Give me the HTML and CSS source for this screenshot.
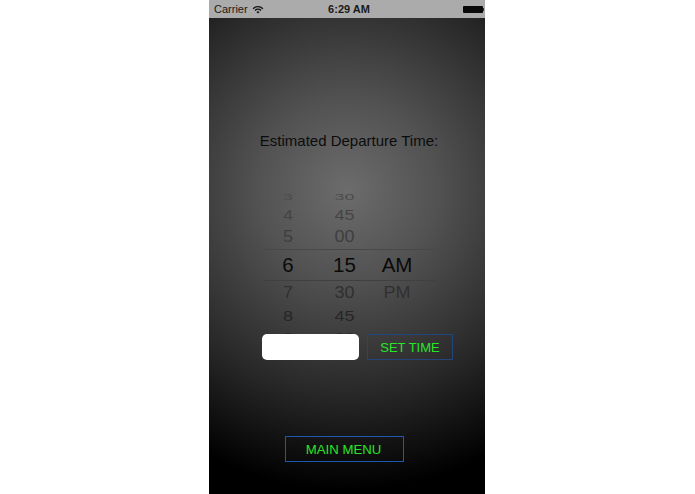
FILE: index.html
```html
<!DOCTYPE html>
<html lang="en">
<head>
  <meta charset="UTF-8" />
  <title>Departure Time</title>
  <link rel="stylesheet" href="styles.css">
</head>
<body>
  <div class="phone">
    <div class="status-bar">
      <div class="status-left">
        <span>Carrier</span>
        <svg class="wifi" width="12" height="9" viewBox="0 0 12 9">
          <path d="M0.6 3.2 A7.6 7.6 0 0 1 11.4 3.2 L10.4 4.2 A6.2 6.2 0 0 0 1.6 4.2 Z" fill="#111"/>
          <path d="M2.5 5 A4.9 4.9 0 0 1 9.5 5 L8.5 6 A3.5 3.5 0 0 0 3.5 6 Z" fill="#111"/>
          <path d="M4.4 6.9 A2.3 2.3 0 0 1 7.6 6.9 L6 8.6 Z" fill="#111"/>
        </svg>
      </div>
      <div class="status-time">6:29 AM</div>
      <div class="status-right">
        <div class="battery"></div>
        <div class="battery-tip"></div>
      </div>
    </div>
    <div class="screen">
      <h1 class="title">Estimated Departure Time:</h1>
      <div class="picker">
        <div class="row row-1"><span>3</span><span>30</span><span></span></div>
        <div class="row row-2"><span>4</span><span>45</span><span></span></div>
        <div class="row row-3"><span>5</span><span>00</span><span></span></div>
        <div class="row row-current"><span>6</span><span>15</span><span>AM</span></div>
        <div class="row row-5"><span>7</span><span>30</span><span>PM</span></div>
        <div class="row row-6"><span>8</span><span>45</span><span></span></div>
        <div class="row row-7"><span>9</span><span>00</span><span></span></div>
      </div>
      <div class="time-controls">
        <input class="time-input" type="text" />
        <button class="outline-btn set-time">SET TIME</button>
      </div>
      <button class="outline-btn main-menu">MAIN MENU</button>
    </div>
  </div>
</body>
</html>
```

FILE: styles.css
```css
body {
  margin: 0;
  background: #fff;
  font-family: 'Liberation Sans', Arial, sans-serif;
}

.phone {
  width: 276px;
  height: 494px;
  margin-left: 209px;
  display: flex;
  flex-direction: column;
  overflow: hidden;
}

.status-bar {
  height: 18px;
  background: #ababab;
  color: #1a1a1a;
  font-size: 11px;
  display: grid;
  grid-template-columns: 1fr auto 1fr;
  align-items: center;
  padding: 0 1px 0 5px;
}

.status-left {
  display: flex;
  align-items: center;
  gap: 4px;
}

.status-time {
  font-weight: 700;
}

.status-right {
  display: flex;
  justify-content: flex-end;
  align-items: center;
}

.battery {
  width: 20px;
  height: 7px;
  background: #0a0a0a;
  border-radius: 1px;
}

.battery-tip {
  width: 1px;
  height: 3px;
  background: #333;
}

.screen {
  flex: 1;
  display: flex;
  flex-direction: column;
  background: radial-gradient(circle 300px at 138px 172px, #6c6c6c 0%, #525252 30%, #282828 68%, #000 100%);
}

.title {
  margin: 114px 0 0;
  height: 18px;
  line-height: 18px;
  font-size: 15px;
  font-weight: 400;
  color: #0c0c0c;
  text-align: center;
  padding-left: 4px;
}

.picker {
  margin: 38px 0 0 55px;
  width: 172px;
  height: 146px;
  overflow: hidden;
}

.row {
  display: grid;
  grid-template-columns: 48px 65px 40px;
  text-align: center;
  align-items: center;
  font-size: 18px;
  line-height: 18px;
}

.row span {
  display: block;
}

.row-1 {
  height: 17px;
  color: #4c4c4c;
}

.row-1 span {
  transform: scaleY(0.46);
}

.row-2 {
  height: 20px;
  color: #444;
}

.row-2 span {
  transform: scaleY(0.8);
}

.row-3 {
  height: 24px;
  color: #3e3e3e;
}

.row-3 span {
  transform: scaleY(0.9);
}

.row-current {
  box-sizing: border-box;
  height: 32px;
  font-size: 20.5px;
  color: #0a0a0a;
  border-top: 1px solid #484848;
  border-bottom: 1px solid #404040;
}

.row-5 {
  height: 24px;
  color: #303030;
}

.row-5 span {
  transform: scaleY(0.9);
}

.row-6 {
  height: 22px;
  color: #262626;
}

.row-6 span {
  transform: scaleY(0.77);
}

.row-7 {
  height: 20px;
  color: #2a2a2a;
}

.row-7 span {
  transform: scaleY(0.6);
}

.time-controls {
  display: flex;
  gap: 8px;
  margin-left: 53px;
}

.time-input {
  box-sizing: border-box;
  width: 97px;
  height: 26px;
  padding: 0;
  border: none;
  border-radius: 5px;
  background: #fff;
}

.outline-btn {
  box-sizing: border-box;
  height: 26px;
  padding: 0;
  background: transparent;
  border: 1px solid #24447c;
  color: #26e626;
  font-family: 'Liberation Sans', Arial, sans-serif;
  font-size: 13.2px;
}

.set-time {
  width: 86px;
  font-size: 13px;
}

.main-menu {
  width: 119px;
  margin: 76px 0 0 76px;
  padding-right: 2px;
  border-color: #1f55b4;
}
```
